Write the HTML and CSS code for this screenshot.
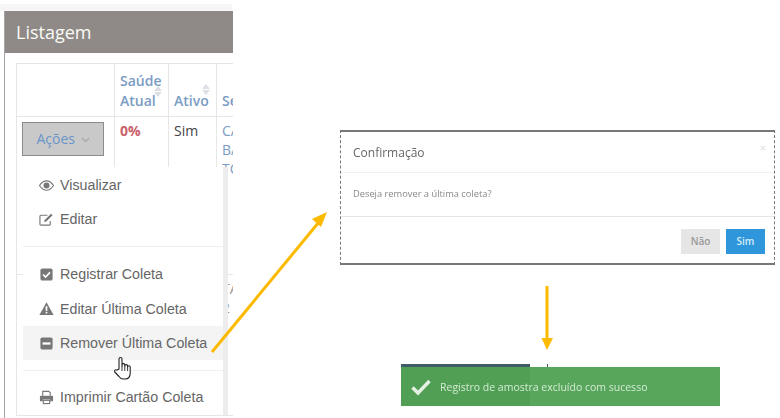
FILE: index.html
```html
<!DOCTYPE html>
<html lang="pt-BR">
<head>
<meta charset="utf-8">
<title>Remover Coleta</title>
<link rel="stylesheet" href="styles.css">
</head>
<body>

<!-- listing panel on the left -->
<div class="topStrip"></div>
<section class="listing">
  <h2 class="listingTitle">Listagem</h2>
  <table class="grid">
    <tr class="headRow">
      <th class="colActions"></th>
      <th class="colHealth">Saúde Atual<span class="sort sortHealth"></span></th>
      <th class="colActive">Ativo<span class="sort sortActive"></span></th>
      <th class="colSector">Se</th>
    </tr>
    <tr class="rowOne">
      <td>
        <button class="actionsBtn">Ações
          <svg class="chev" width="9" height="6" viewBox="0 0 9 6"><path d="M1 1l3.5 3.5L8 1" fill="none" stroke="#a9a9a9" stroke-width="1.3"/></svg>
        </button>
      </td>
      <td class="zero">0%</td>
      <td>Sim</td>
      <td class="sectorCell">CA<br>BA<br>TC</td>
    </tr>
    <tr class="rowTwo">
      <td></td><td></td><td></td>
      <td class="sectorCell">TA<br>2</td>
    </tr>
  </table>

  <div class="menu">
    <ul class="menuGroup groupOne">
      <li>
        <svg class="ico" viewBox="0 0 16 16"><path d="M0.5 8C3 4.3 5.4 3 8 3s5 1.3 7.5 5c-2.5 3.7-4.900 5-7.500 5S3 11.700.5 8z" fill="none" stroke="#777" stroke-width="1.2"/><circle cx="8" cy="8" r="3.200" fill="#777"/></svg>
        Visualizar
      </li>
      <li>
        <svg class="ico" viewBox="0 0 16 16"><path d="M12 9.500V13a1 1 0 0 1-1 1H2a1 1 0 0 1-1-1V4.500a1 1 0 0 1 1-1h7" fill="none" stroke="#777" stroke-width="1.200"/><path d="M6 8.500L12.800 1.800l1.700 1.700L7.700 10.200 5.500 10.700z" fill="#777"/></svg>
        Editar
      </li>
    </ul>
    <ul class="menuGroup groupTwo">
      <li>
        <svg class="ico" viewBox="0 0 16 16"><rect x="1.500" y="1.500" width="13" height="13" rx="2" fill="#777"/><path d="M4.300 8l2.700 2.700 4.700-4.900" fill="none" stroke="#fff" stroke-width="1.800"/></svg>
        Registrar Coleta
      </li>
      <li>
        <svg class="ico" viewBox="0 0 16 16"><path d="M8 1.200l7.600 13.600H.4z" fill="#777"/><rect x="7.100" y="5.500" width="1.800" height="5" fill="#fff"/><rect x="7.100" y="11.500" width="1.800" height="1.800" fill="#fff"/></svg>
        Editar Última Coleta
      </li>
      <li class="hovered">
        <svg class="ico" viewBox="0 0 16 16"><rect x="1.500" y="1.500" width="13" height="13" rx="2" fill="#777"/><rect x="3.800" y="6.800" width="8.400" height="2.400" fill="#fff"/></svg>
        Remover Última Coleta
      </li>
    </ul>
    <ul class="menuGroup groupThree">
      <li>
        <svg class="ico" viewBox="0 0 16 16"><path d="M4 6V1.500h6.500L12 3v3" fill="none" stroke="#777" stroke-width="1.200"/><path d="M1 7a1 1 0 0 1 1-1h12a1 1 0 0 1 1 1v5h-3v-2H4v2H1z" fill="#777"/><rect x="4.600" y="11" width="6.800" height="3.500" fill="none" stroke="#777" stroke-width="1.200"/></svg>
        Imprimir Cartão Coleta
      </li>
    </ul>
  </div>
</section>

<!-- hand cursor over the hovered item -->
<svg class="hand" width="20" height="26" viewBox="0 0 20 26"><path d="M6 13V3a1.500 1.500 0 0 1 3 0v7l0-1a1.400 1.400 0 0 1 2.800 0v1a1.400 1.400 0 0 1 2.800 0v1a1.300 1.300 0 0 1 2.600 0v6c0 3.500-1.800 6-5 6H10c-2 0-3-1-4-2.500L1.800 16c-1-1.500.7-3 2-1.800z" fill="#fff" stroke="#222" stroke-width="1.100" stroke-linejoin="round"/><path d="M9 10v5M11.800 10v5M14.600 11v4" stroke="#222" stroke-width=".9"/></svg>

<!-- yellow arrows linking the steps -->
<svg class="arrows" width="780" height="418" viewBox="0 0 780 418">
  <path d="M212 352L319 222" stroke="#fbb900" stroke-width="3" fill="none"/>
  <path d="M327 212l-15 7 9 8z" fill="#fbb900"/>
  <path d="M547 286v54" stroke="#fbb900" stroke-width="3" fill="none"/>
  <path d="M541.500 338h11.500L547 350z" fill="#fbb900"/>
</svg>

<!-- confirmation dialog -->
<div class="dialog">
  <div class="dialogHead">
    <span class="dialogTitle">Confirmação</span>
    <span class="dialogClose">×</span>
  </div>
  <div class="dialogBody">Deseja remover a última coleta?</div>
  <div class="dialogFoot">
    <span class="btnNo">Não</span>
    <span class="btnYes">Sim</span>
  </div>
</div>

<!-- success toast -->
<div class="toast">
  <div class="toastTop"><span class="toastDark"></span><span class="toastTick"></span></div>
  <div class="toastBar">
    <svg width="22" height="18" viewBox="0 0 22 18"><path d="M2.500 9.500l5.500 5.500L19.500 3" fill="none" stroke="#e4f1e4" stroke-width="3.400"/></svg>
    <span class="toastText">Registro de amostra excluído com sucesso</span>
  </div>
</div>

</body>
</html>
```

FILE: styles.css
```css
html, body {
  margin: 0;
  padding: 0;
  width: 780px;
  height: 418px;
  overflow: hidden;
  background-color: #fff;
  font-family: "Open Sans", sans-serif;
}

.topStrip {
  position: absolute;
  left: 0;
  top: 4px;
  width: 232px;
  height: 7px;
  background-color: #f6f6f6;
}

/* Listing panel */
.listing {
  position: absolute;
  left: 4px;
  top: 11px;
  width: 229px;
  height: 407px;
  overflow: hidden;
  border-left: 1px solid #a5a5a8;
  box-sizing: border-box;
}

.listingTitle {
  margin: 0;
  height: 42px;
  line-height: 42px;
  padding-left: 11px;
  background-color: #8f8a87;
  color: #fbfbf6;
  font-size: 18px;
  font-weight: 400;
}

.grid {
  margin: 10px 0 0 11px;
  border-collapse: collapse;
  table-layout: fixed;
  width: 250px;
  font-size: 14px;
  line-height: 19px;
  color: #444;
}

.grid th, .grid td {
  border: 1px solid #e6e6e6;
  padding: 0 0 0 5px;
  text-align: left;
  vertical-align: top;
  position: relative;
}

.colActions { width: 92px; }
.colHealth { width: 48px; }
.colActive { width: 42px; }

.headRow { height: 53px; }

.headRow th {
  vertical-align: bottom;
  padding-bottom: 5px;
  color: #7b9cc4;
  font-weight: 600;
  line-height: 20px;
}

.rowOne { height: 158px; }
.rowOne td { padding-top: 4px; }

.rowTwo { height: 141px; }
.rowTwo td { padding-top: 4px; }

.zero {
  color: #c9606a;
  font-weight: 700;
}

.sectorCell { color: #7b9cc4; }

.rowTwo .sectorCell {
  color: #999;
  padding-left: 5px;
}

/* sort arrows on the headers */
.sort {
  position: absolute;
  width: 0;
  height: 0;
  border-left: 4px solid transparent;
  border-right: 4px solid transparent;
  border-bottom: 5px solid #dcdfe4;
}

.sort::after {
  content: "";
  position: absolute;
  left: -4px;
  top: 6px;
  border-left: 4px solid transparent;
  border-right: 4px solid transparent;
  border-top: 5px solid #dcdfe4;
}

.sortHealth { left: 39px; top: 22px; }
.sortActive { left: 33px; top: 20px; }

.actionsBtn {
  display: block;
  width: 82px;
  height: 34px;
  margin: 1px 0 0 0;
  padding: 0 0 2px 0;
  box-sizing: border-box;
  background-color: #c9c9c9;
  border: 1px solid #8c8c8c;
  color: #6a95c9;
  font-family: "Open Sans", sans-serif;
  font-size: 14px;
}

.chev {
  margin-left: 2px;
  vertical-align: 1px;
}

/* Dropdown menu */
.menu {
  position: absolute;
  left: 18px;
  top: 156px;
  width: 200px;
  height: 248px;
  box-sizing: border-box;
  background-color: #fff;
  box-shadow: 5px 0 0 #ededed;
  font-family: "Liberation Sans", sans-serif;
  font-size: 14.25px;
  color: #666;
}

.menu::before {
  content: "";
  position: absolute;
  left: 11px;
  top: -6px;
  border-left: 7px solid transparent;
  border-right: 7px solid transparent;
  border-bottom: 6px solid #fff;
}

.menuGroup {
  list-style-type: none;
  margin: 0;
  padding: 0;
}

.menuGroup li {
  display: flex;
  align-items: center;
  gap: 6px;
  height: 34px;
  padding-left: 16px;
}

.groupOne {
  padding-top: 1px;
  height: 78px;
  border-bottom: 1px solid #efefef;
  box-sizing: content-box;
}

.groupTwo {
  padding-top: 10px;
  height: 113px;
  border-bottom: 1px solid #efefef;
}

.groupTwo li:nth-child(2) { height: 35px; }

.groupTwo .hovered {
  height: 34px;
  background-color: #f4f4f4;
}

.groupThree { padding-top: 9px; }

.ico {
  width: 15px;
  height: 15px;
  flex-shrink: 0;
}

.hand {
  position: absolute;
  left: 113px;
  top: 356px;
}

.arrows {
  position: absolute;
  left: 0;
  top: 0;
}

/* Confirmation dialog */
.dialog {
  position: absolute;
  left: 340px;
  top: 130px;
  width: 435px;
  height: 135px;
  box-sizing: border-box;
  background-color: #fff;
  border: 1px dashed #777;
  border-top: 2px solid #777;
  border-bottom: 2px solid #777;
  color: #777;
}

.dialogHead {
  display: flex;
  justify-content: space-between;
  align-items: center;
  height: 40px;
  padding: 0 8px 0 12px;
  border-bottom: 1px solid #f0f0f0;
}

.dialogTitle {
  font-size: 12px;
  color: #666;
  filter: blur(.4px);
}

.dialogClose {
  font-size: 11px;
  color: #ddd;
  margin-bottom: 10px;
}

.dialogBody {
  height: 43px;
  line-height: 42px;
  padding-left: 12px;
  font-size: 9.3px;
  color: #888;
  border-bottom: 1px solid #e6e6e6;
  filter: blur(.4px);
}

.dialogFoot {
  display: flex;
  justify-content: flex-end;
  gap: 6px;
  padding: 12px 9px 0 0;
}

.btnNo, .btnYes {
  width: 39px;
  height: 25px;
  line-height: 25px;
  text-align: center;
  font-size: 10px;
  font-weight: 600;
}

.btnNo {
  background-color: #e6e6e6;
  color: #999;
}

.btnYes {
  background-color: #2f96dc;
  color: #d5ecfa;
}

/* Toast */
.toast {
  position: absolute;
  left: 401px;
  top: 364px;
  width: 319px;
}

.toastTop {
  display: flex;
  height: 3px;
}

.toastDark {
  width: 129px;
  background-color: #3f5c66;
}

.toastTick {
  width: 18px;
  border-right: 1px solid #555;
  box-sizing: border-box;
}

.toastBar {
  display: flex;
  align-items: center;
  gap: 8px;
  height: 39px;
  padding-left: 9px;
  background-color: #56a55a;
  background-image: linear-gradient(to right, #519f55 129px, #57a65b 129px);
}

.toastText {
  font-size: 10.5px;
  color: #d4ecd4;
  filter: blur(.3px);
}
```
